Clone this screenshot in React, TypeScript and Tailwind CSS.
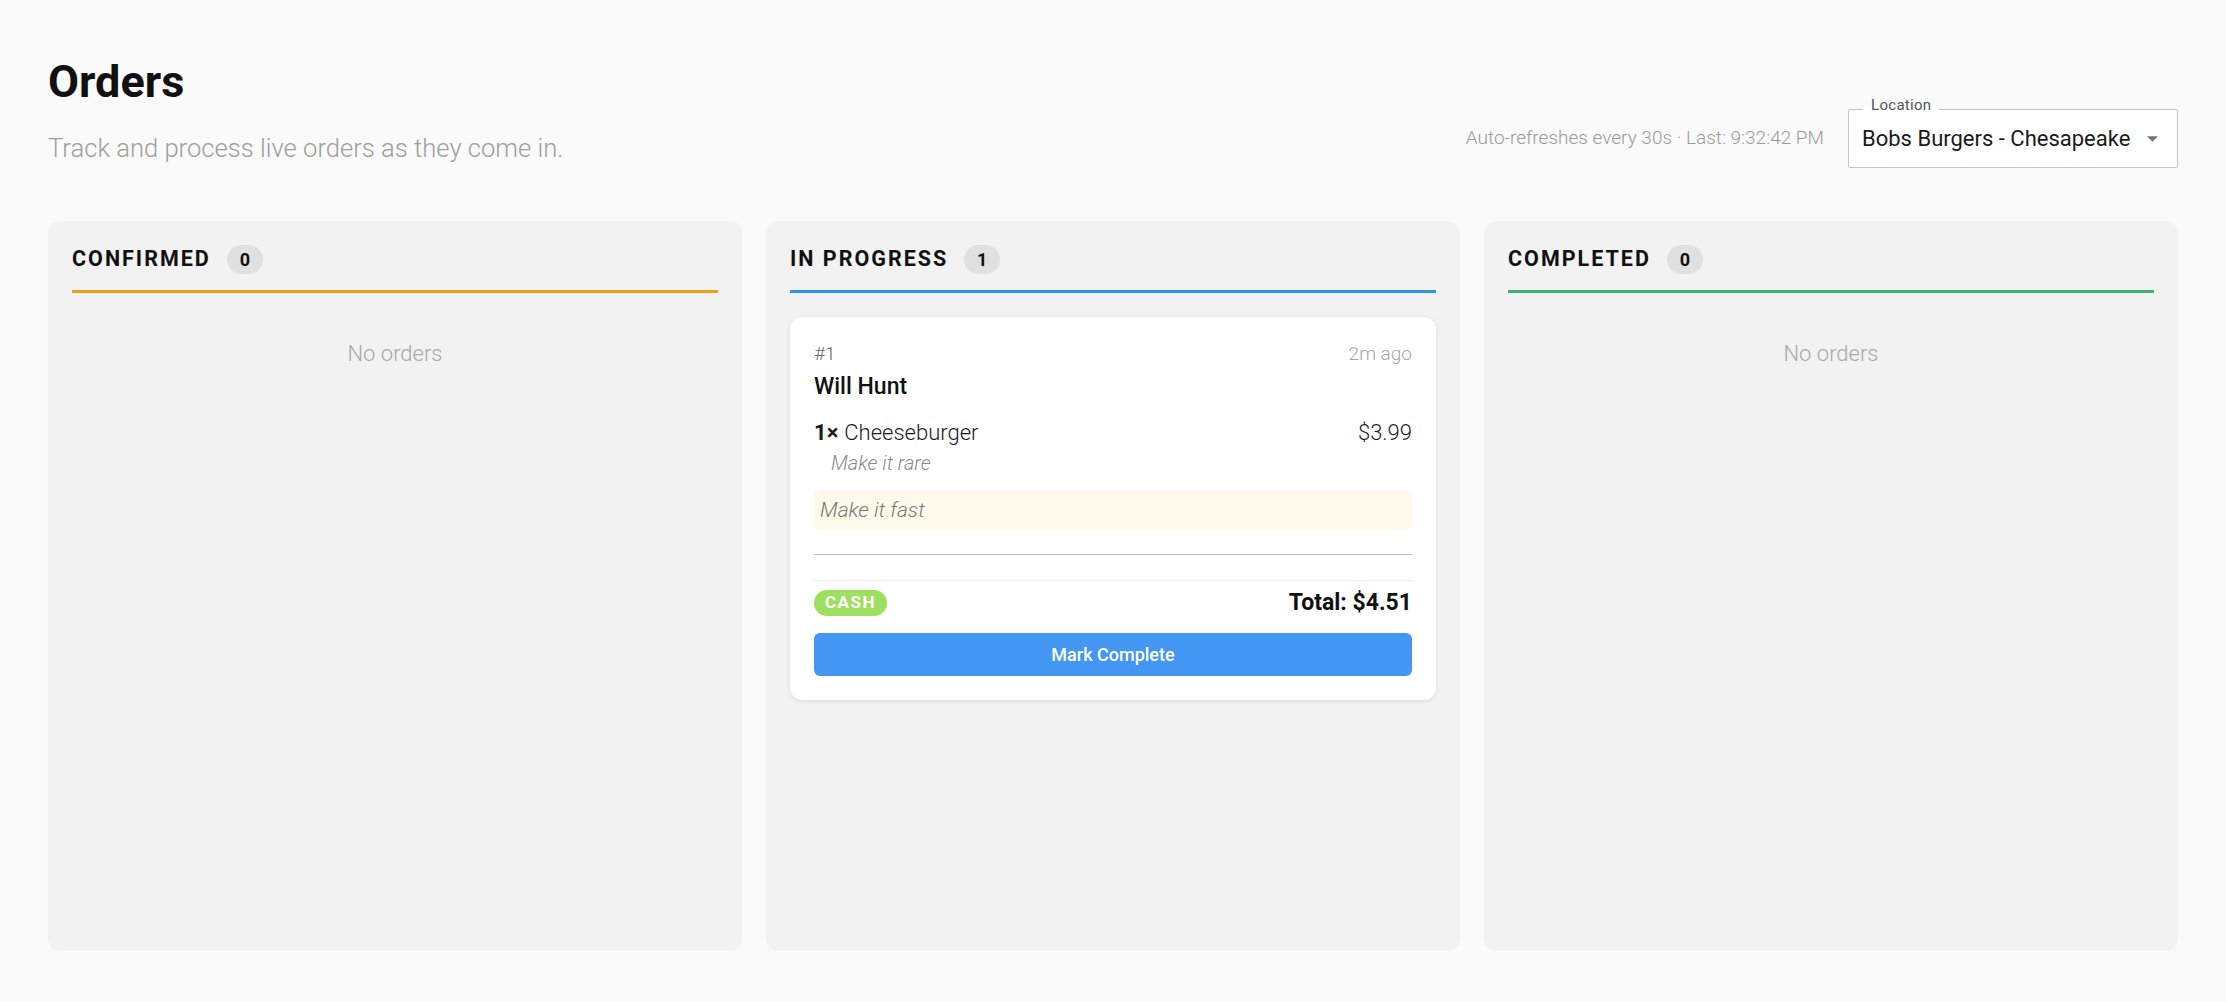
import React from "react";

type Column = {
  key: string;
  title: string;
  accent: string;
  orders: Order[];
};

type Order = {
  number: number;
  customer: string;
  age: string;
  items: { qty: number; name: string; price: string; note?: string }[];
  note?: string;
  payment: string;
  total: string;
};

const inProgress: Order[] = [
  {
    number: 1,
    customer: "Will Hunt",
    age: "2m ago",
    items: [{ qty: 1, name: "Cheeseburger", price: "$3.99", note: "Make it rare" }],
    note: "Make it fast",
    payment: "CASH",
    total: "$4.51",
  },
];

const columns: Column[] = [
  { key: "confirmed", title: "CONFIRMED", accent: "bg-[#f39c1a]", orders: [] },
  { key: "progress", title: "IN PROGRESS", accent: "bg-[#3490ef]", orders: inProgress },
  { key: "completed", title: "COMPLETED", accent: "bg-[#3cb275]", orders: [] },
];

function OrderCard({ order }: { order: Order }) {
  return (
    <div className="mt-6 rounded-xl bg-white p-6 shadow-[0_1px_4px_rgba(0,0,0,0.10)]">
      <div className="flex items-center justify-between text-[19px] leading-[25px] font-light">
        <span className="text-[#666]">#{order.number}</span>
        <span className="text-[#a6a6a6]">{order.age}</span>
      </div>
      <div className="mt-[7px] text-[23px] leading-[28px] font-medium text-[#111]">{order.customer}</div>

      {order.items.map((it) => (
        <div key={it.name}>
          <div className="mt-[18px] flex items-center justify-between text-[22px] leading-[28px] text-[#1c1c1c]">
            <span>
              <span className="font-bold">{it.qty}×</span>
              <span className="ml-[6px] font-light">{it.name}</span>
            </span>
            <span className="font-light">{it.price}</span>
          </div>
          {it.note && (
            <div className="mt-[4px] pl-[17px] text-[20px] leading-[24px] font-light italic text-[#8a8a8a]">
              {it.note}
            </div>
          )}
        </div>
      ))}

      {order.note && (
        <div className="mt-[15px] h-[40px] rounded-md bg-[#fefaeb] px-[6px] text-[21px] leading-[40px] font-light italic text-[#777]">
          {order.note}
        </div>
      )}

      <div className="mt-6 h-px bg-[#bdbdbd]" />

      <div className="mt-[25px] border-t border-[#eeeeee] pt-[8px]">
        <div className="flex h-[28px] items-center justify-between">
          <span className="flex h-[26px] items-center rounded-full bg-[#9de060] px-[11px] text-[17px] font-bold tracking-[1.5px] text-white">
            {order.payment}
          </span>
          <span className="text-[23px] leading-[28px] font-bold text-[#111]">Total: {order.total}</span>
        </div>
      </div>

      <button className="mt-4 flex h-[43px] w-full items-center justify-center rounded-md bg-[#4396f1] text-[18px] font-medium text-white">
        Mark Complete
      </button>
    </div>
  );
}

function BoardColumn({ col }: { col: Column }) {
  return (
    <section className="flex flex-col rounded-xl bg-[#f2f2f2] px-6 pt-6">
      <div className="flex h-[29px] items-center gap-[16px]">
        <h2 className="text-[21.5px] font-bold tracking-[2px] text-[#111]">{col.title}</h2>
        <span className="flex h-[29px] min-w-[36px] items-center justify-center rounded-full bg-[#e0e0e0] px-2 text-[18px] font-bold text-[#111]">
          {col.orders.length}
        </span>
      </div>
      <div className={`mt-4 h-[3px] ${col.accent}`} />
      {col.orders.length === 0 ? (
        <div className="mt-[46px] text-center text-[22px] leading-[30px] font-light text-[#a8a8a8]">No orders</div>
      ) : (
        col.orders.map((o) => <OrderCard key={o.number} order={o} />)
      )}
    </section>
  );
}

function LocationSelect() {
  return (
    <div className="relative flex h-[59px] w-[330px] items-center justify-between rounded-[2px] border border-[#c4c4c4] bg-white pl-[13px] pr-[19px]">
      <span className="absolute left-[14px] -top-[12px] bg-[linear-gradient(to_bottom,#fafafa_55%,#ffffff_55%)] px-[8px] text-[15px] leading-[15px] tracking-[0.3px] text-[#555]">
        Location
      </span>
      <span className="text-[22px] text-[#1a1a1a]">Bobs Burgers - Chesapeake</span>
      <svg width="11" height="6" viewBox="0 0 10 5" className="fill-[#757575]">
        <path d="M0 0 L10 0 L5 5 Z" />
      </svg>
    </div>
  );
}

export default function App() {
  return (
    <div className="flex h-screen flex-col bg-[#fafafa] px-12 pt-[55px] pb-[51px] font-['Roboto','Liberation_Sans',sans-serif]">
      <header className="flex items-start justify-between">
        <div>
          <h1 className="text-[45px] leading-[54px] font-bold text-[#111]">Orders</h1>
          <p className="mt-[21px] text-[25.6px] leading-[36px] font-light text-[#9e9e9e]">
            Track and process live orders as they come in.
          </p>
        </div>
        <div className="mt-[54px] flex items-center gap-6">
          <span className="text-[19px] font-light text-[#9a9a9a]">Auto-refreshes every 30s · Last: 9:32:42 PM</span>
          <LocationSelect />
        </div>
      </header>

      <main className="mt-[53px] grid flex-1 grid-cols-3 gap-6">
        {columns.map((c) => (
          <BoardColumn key={c.key} col={c} />
        ))}
      </main>
    </div>
  );
}
